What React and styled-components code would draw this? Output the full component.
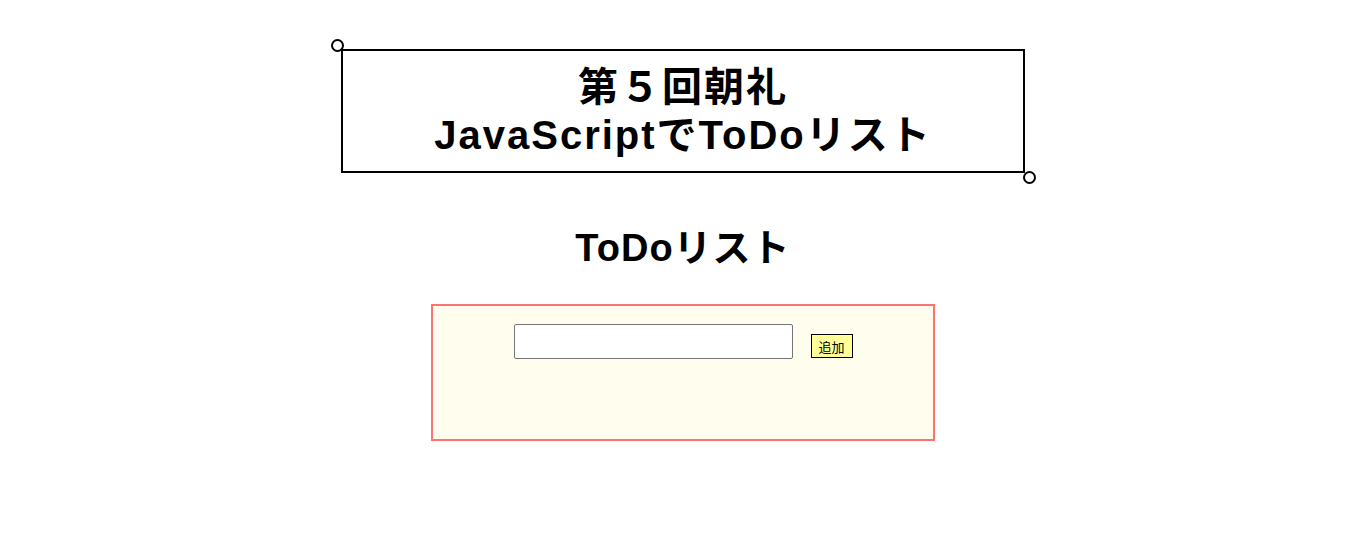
import React from "react";
import styled, { createGlobalStyle } from "styled-components";

const GlobalStyle = createGlobalStyle`
  body {
    margin: 0;
    background: #ffffff;
    font-family: "Liberation Sans", "Noto Sans CJK JP", sans-serif;
    color: #000000;
  }
`;

const Page = styled.div`
  padding-top: 49px;
  display: flex;
  flex-direction: column;
  align-items: center;
`;

const TitleBox = styled.div`
  position: relative;
  box-sizing: border-box;
  width: 684px;
  border: 2px solid #000;
  padding: 12px 0;

  &::before,
  &::after {
    content: "";
    position: absolute;
    width: 13px;
    height: 13px;
    box-sizing: border-box;
    border: 2px solid #000;
    border-radius: 50%;
    background: #fff;
  }
  &::before {
    left: -12px;
    top: -12px;
  }
  &::after {
    right: -13px;
    bottom: -13px;
  }
`;

const Title = styled.h1`
  margin: 0;
  text-align: center;
  font-size: 40px;
  line-height: 48px;
  font-weight: 700;
  letter-spacing: 2px;
`;

const Heading = styled.h2`
  margin: 52px 0 33px;
  font-size: 38px;
  line-height: 46px;
  font-weight: 700;
  letter-spacing: 1px;
  text-align: center;
`;

const TodoPanel = styled.div`
  box-sizing: border-box;
  width: 504px;
  height: 137px;
  border: 2px solid #ff7272;
  background: #fffded;
  padding-top: 18px;
`;

const Form = styled.div`
  display: flex;
  justify-content: center;
  align-items: flex-end;
  gap: 18px;
`;

const TextInput = styled.input`
  box-sizing: border-box;
  width: 279px;
  height: 35px;
  border: 1px solid #767676;
  border-radius: 2px;
  background: #fff;
`;

const AddButton = styled.button`
  box-sizing: border-box;
  width: 42px;
  height: 24px;
  padding: 0;
  margin-bottom: 1px;
  border: 1px solid #000;
  background: #ffff99;
  font-size: 13px;
  font-family: "Noto Sans CJK JP", sans-serif;
  color: #000;
`;

const App = () => {
  return (
    <Page>
      <GlobalStyle />
      <TitleBox>
        <Title>
          第５回朝礼
          <br />
          JavaScriptでToDoリスト
        </Title>
      </TitleBox>
      <Heading>ToDoリスト</Heading>
      <TodoPanel>
        <Form>
          <TextInput type="text" />
          <AddButton>追加</AddButton>
        </Form>
      </TodoPanel>
    </Page>
  );
};

export default App;
